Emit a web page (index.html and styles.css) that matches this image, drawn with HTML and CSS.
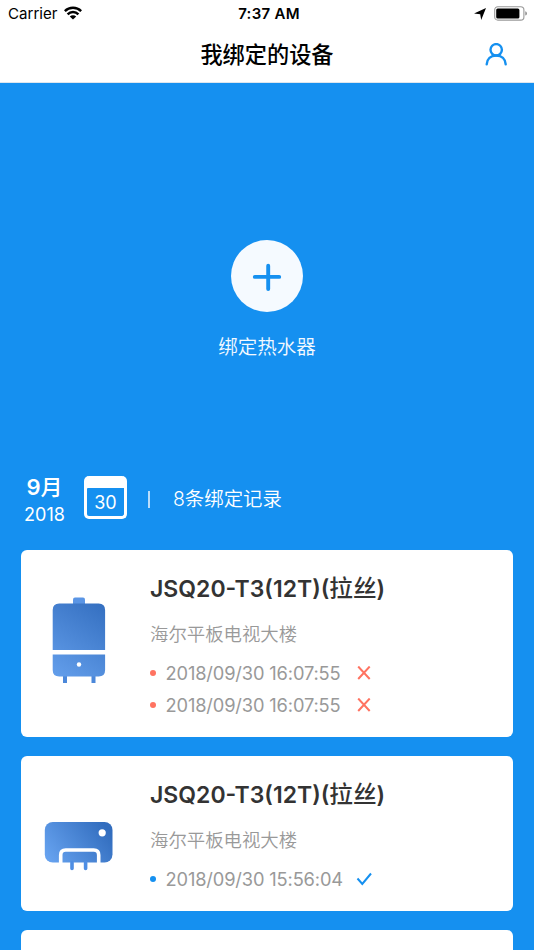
FILE: index.html
```
<!DOCTYPE html>
<html lang="zh-CN">
<head>
<meta charset="utf-8">
<title>我绑定的设备</title>
<link rel="stylesheet" href="styles.css">
</head>
<body>
<header class="header">
  <div class="status">
    <div class="status-left">
      <span class="carrier">Carrier</span>
      <svg class="wifi" width="18" height="14" viewBox="0 0 18 14" fill="none" stroke="#000" stroke-width="2.5">
        <path d="M.8 5.1a11.6 11.6 0 0 1 16.4 0M3.6 8.3a7.7 7.7 0 0 1 10.8 0"/>
        <path d="M9 13.6 5.8 10.5a4.6 4.6 0 0 1 6.4 0z" fill="#000" stroke="none"/>
      </svg>
    </div>
    <span class="clock">7:37 AM</span>
    <div class="status-right">
      <svg width="12" height="12" viewBox="0 0 12 12"><path d="M12 0 7.2 12 6.2 6.2 0 5.4z"/></svg>
      <svg width="33" height="15" viewBox="0 0 33 15">
        <rect x=".7" y=".7" width="29.2" height="13.4" rx="3.2" fill="none" stroke="#999" stroke-width="1.1"/>
        <rect x="2.2" y="2.4" width="23.2" height="10" rx="1.5"/>
        <path d="M31.3 5.2q1.6.5 1.6 2.2t-1.6 2.2z" fill="#888"/>
      </svg>
    </div>
  </div>
  <div class="navbar">
    <h1>我绑定的设备</h1>
    <svg class="user" width="22" height="24" viewBox="0 0 22 24" fill="none" stroke="#1590f0" stroke-width="2.4" stroke-linecap="round">
      <circle cx="11.2" cy="6.8" r="5.7"/><path d="M1.7 21.4C2 15.8 5.7 12.500 11.2 12.500s9.2 3.300 9.500 8.900"/>
    </svg>
  </div>
</header>

<section class="bind">
  <div class="add">
    <svg width="30" height="30" viewBox="0 0 30 30" stroke="#1590f0" stroke-width="3.900" stroke-linecap="round"><path d="M2.800 15.900H27.200M16.200 4.800V28"/></svg>
  </div>
  <div class="bind-label">绑定热水器</div>
</section>

<section class="summary">
  <div class="date"><div class="month">9<span>月</span></div><div class="year">2018</div></div>
  <div class="calendar"><span>30</span></div>
  <div class="divider"></div>
  <div class="count">8条绑定记录</div>
</section>

<main class="cards">
  <article class="card">
    <svg class="device" width="129" height="150" viewBox="0 0 129 150">
      <defs><linearGradient id="boiler" gradientUnits="userSpaceOnUse" x1="35" y1="125" x2="84" y2="54"><stop stop-color="#629dea"/><stop offset="1" stop-color="#346fc0"/></linearGradient></defs>
      <path d="M52 54V49.500q0-2 2-2h8q2 0 2 2V54z" fill="#5a95e5"/>
      <path d="M42 126h4v7h-4zM70.500 126h4v7h-4z" fill="#4c88da"/>
      <path d="M31.700 100V60q0-6.500 6.500-6.500h39.400q6.500 0 6.500 6.500v40zM31.700 104.500h52.400V120q0 6.500-6.500 6.500H38.200q-6.500 0-6.500-6.500z" fill="url(#boiler)"/>
      <circle cx="58" cy="114.500" r="2.200" fill="#fff"/>
    </svg>
    <div class="info">
      <h2>JSQ20-T3(12T)(<span>拉丝</span>)</h2>
      <p>海尔平板电视大楼</p>
      <ul>
        <li class="failed"><i></i><time>2018/09/30 16:07:55</time><svg width="16" height="14" viewBox="0 0 16 14"><path d="M2.200.5 13.700 13M13.700.5 2.200 13"/></svg></li>
        <li class="failed"><i></i><time>2018/09/30 16:07:55</time><svg width="16" height="14" viewBox="0 0 16 14"><path d="M2.200.5 13.700 13M13.700.5 2.200 13"/></svg></li>
      </ul>
    </div>
  </article>
  <article class="card">
    <svg class="device" width="129" height="150" viewBox="0 0 129 150">
      <defs><linearGradient id="heater" gradientUnits="userSpaceOnUse" x1="27" y1="103" x2="80" y2="64"><stop stop-color="#66a2ef"/><stop offset="1" stop-color="#326dbe"/></linearGradient></defs>
      <rect x="23.800" y="66" width="67.700" height="40.500" rx="8" fill="url(#heater)"/>
      <path d="M39.700 107V99q0-5 5-5h28q5 0 5 5v8" fill="none" stroke="#fff" stroke-width="3.600"/>
      <path d="M51 106.500V112.500M64.600 106.500V112.500" stroke="#4e8ee4" stroke-width="3.600" stroke-linecap="round"/>
      <circle cx="81.200" cy="76.800" r="3.600" fill="#fff"/>
    </svg>
    <div class="info">
      <h2>JSQ20-T3(12T)(<span>拉丝</span>)</h2>
      <p>海尔平板电视大楼</p>
      <ul>
        <li class="done"><i></i><time>2018/09/30 15:56:04</time><svg width="16" height="14" viewBox="0 0 16 14"><path d="M1.500 6.500 6.300 12 15 1.500"/></svg></li>
      </ul>
    </div>
  </article>
  <article class="card next"></article>
</main>
</body>
</html>
```
FILE: styles.css
```
* { box-sizing: border-box; margin: 0; padding: 0; }
body {
  width: 534px;
  height: 950px;
  overflow: hidden;
  background: #1590f0;
  font-family: Inter, "Noto Sans CJK SC", sans-serif;
  white-space: nowrap;
  display: flex;
  flex-direction: column;
}
svg { display: block; flex: none; }

.header { height: 83px; background: #fff; border-bottom: 1px solid #dde6ee; flex: none; }
.status {
  height: 27px;
  padding: 0 7px 0 8px;
  display: grid;
  grid-template-columns: 1fr auto 1fr;
  align-items: center;
  font-size: 15.1px;
  color: #000;
}
.status-left { display: flex; align-items: center; gap: 7px; }
.wifi { margin-bottom: 1px; }
.clock { padding: 0 0 0 3px; font-weight: 600; font-size: 15px; letter-spacing: 0.3px; }
.status-right { display: flex; align-items: center; justify-content: flex-end; gap: 8px; }
.navbar {
  height: 55px;
  display: grid;
  grid-template-columns: 1fr auto 1fr;
  align-items: center;
  padding: 0 27px;
}
.navbar h1 { grid-column: 2; font-size: 22.2px; font-weight: 500; line-height: 32px; color: #000; }
.user { justify-self: end; }

.bind { height: 386px; padding-top: 157px; display: flex; flex-direction: column; align-items: center; flex: none; }
.add {
  width: 72px;
  height: 72px;
  flex: none;
  border-radius: 50%;
  background: #f5faff;
  display: flex;
  align-items: center;
  justify-content: center;
}
.bind-label { margin-top: 20px; font-size: 19.5px; line-height: 30px; color: #f3f9ff; font-weight: 350; }

.summary { height: 57px; padding-left: 24px; display: flex; align-items: center; color: #fff; flex: none; }
.date { width: 41px; padding-top: 3px; text-align: center; }
.month { font-size: 22px; line-height: 30px; font-weight: 600; }
.month span { font-weight: 500; }
.year { font-size: 18px; line-height: 25px; }
.calendar {
  width: 43px;
  height: 43px;
  margin-left: 19px;
  border: 3px solid #fff;
  border-top: 0;
  border-radius: 5px;
  background: radial-gradient(circle at 2px 2px, transparent 2px, #fff 2.5px) 0 12px / 2px 2px no-repeat, linear-gradient(#fff, #fff) 0 0 / 100% 12px no-repeat;
  padding-top: 12px;
  display: flex;
  align-items: center;
  justify-content: center;
  font-size: 18px;
}
.divider { width: 2px; height: 17px; margin: 3px 0 0 21px; background: #b9ddfb; }
.count { margin-left: 23px; font-size: 19.4px; font-weight: 350; }

.cards { flex: 1; min-height: 0; overflow: hidden; padding: 24px 21px 0; display: flex; flex-direction: column; gap: 19px; }
.card { background: #fff; border-radius: 6px; display: flex; flex: none; }
.next { flex: 1; min-height: 0; border-radius: 6px 6px 0 0; }
.info { padding: 21px 0 16px; }
.info h2 { font-size: 23px; line-height: 36px; font-weight: 600; color: #333; }
.info h2 span { font-weight: 500; font-size: 23.6px; line-height: 1; }
.info p { margin: 14px 0 10px; font-size: 18.4px; line-height: 26px; font-weight: 350; color: #999; }
.info ul { list-style: none; }
.info li { height: 32px; display: flex; align-items: center; font-size: 18.3px; letter-spacing: -0.15px; color: #999; }
.info i { width: 6px; height: 6px; border-radius: 50%; margin-right: 9.5px; }
.info time { width: 190.5px; }
.info li svg { fill: none; stroke-width: 2; }
.failed i { background: #ff7361; }
.failed svg { stroke: #ff7361; }
.done i { background: #1590f0; }
.done svg { stroke: #1590f0; }
```
